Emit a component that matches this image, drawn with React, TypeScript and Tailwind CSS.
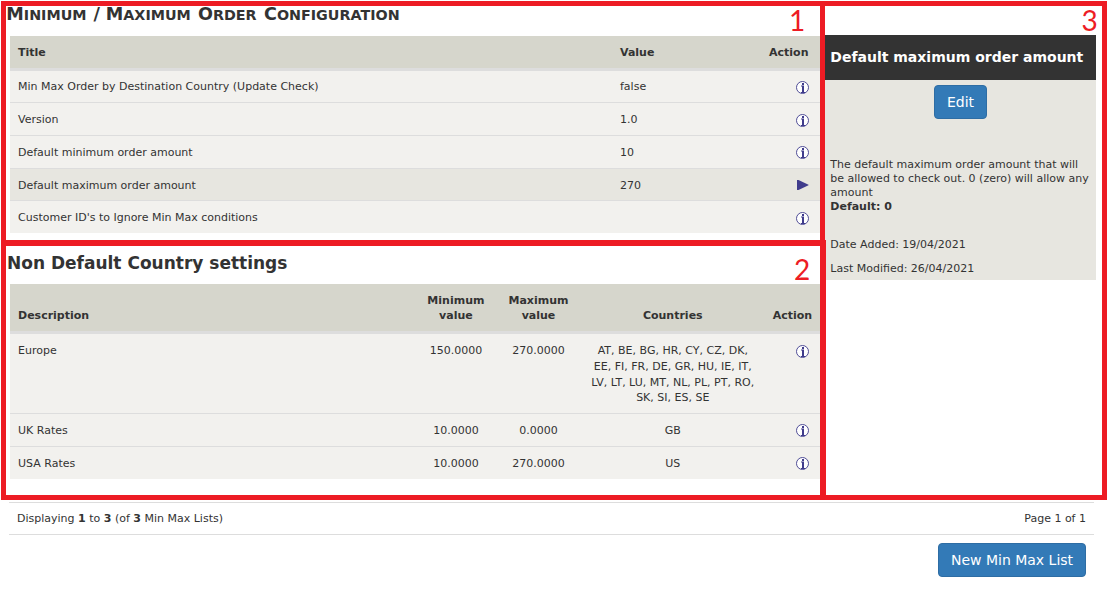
import type { ReactNode } from "react";

type ConfigRow = { title: string; value: string; height: string; icon: string; selected?: boolean };
type RateRow = { name: string; min: string; max: string; countries: string; height: string; icon: string };

const headingWords = [
  { text: "Minimum", style: "w-[87.3px] first-letter:text-[17.6px]" },
  { text: "/", style: "w-[12.2px] text-[17.6px]" },
  { text: "Maximum", style: "w-[92.2px] first-letter:text-[17.6px]" },
  { text: "Order", style: "w-[66px] first-letter:text-[17.6px]" },
  { text: "Configuration", style: "first-letter:text-[17.6px]" },
];

const configRows: ConfigRow[] = [
  { title: "Min Max Order by Destination Country (Update Check)", value: "false", height: "h-[31px] pt-2", icon: "mt-[2px]" },
  { title: "Version", value: "1.0", height: "h-[33px] pt-[9px] border-t", icon: "mt-[2px]" },
  { title: "Default minimum order amount", value: "10", height: "h-[33px] pt-[9px] border-t", icon: "mt-px" },
  { title: "Default maximum order amount", value: "270", height: "h-8 pt-[9px] border-t", icon: "mt-px", selected: true },
  { title: "Customer ID's to Ignore Min Max conditions", value: "", height: "h-[33px] pt-[9px] border-t", icon: "mt-[2px]" },
];

const rateRows: RateRow[] = [
  {
    name: "Europe",
    min: "150.0000",
    max: "270.0000",
    countries: "AT, BE, BG, HR, CY, CZ, DK, EE, FI, FR, DE, GR, HU, IE, IT, LV, LT, LU, MT, NL, PL, PT, RO, SK, SI, ES, SE",
    height: "h-[79px] pt-[9.3px]",
    icon: "mt-[1.7px]",
  },
  { name: "UK Rates", min: "10.0000", max: "0.0000", countries: "GB", height: "h-[33px] pt-[9px] border-t", icon: "mt-px" },
  { name: "USA Rates", min: "10.0000", max: "270.0000", countries: "US", height: "h-[33px] pt-[9px] border-t", icon: "mt-px" },
];

function InfoIcon({ className }: { className: string }) {
  return (
    <svg width="13" height="13" viewBox="0 0 13 13" className={`block shrink-0 ${className}`}>
      <circle cx="6.5" cy="6.5" r="6" fill="#fff" stroke="#403c8c" strokeWidth="0.9" />
      <path d="M6 2h2v2H6zM5 4.5h3V11h1v1H5v-1h1V5.5H5z" fill="#403c8c" />
    </svg>
  );
}

function ArrowIcon({ className }: { className: string }) {
  return (
    <svg width="13" height="13" viewBox="0 0 13 13" className={`block shrink-0 ${className}`}>
      <path d="M1 1h1.5L12.5 5.7v.6L2.5 11H1z" fill="#403c8c" />
    </svg>
  );
}

function Button({ children, className }: { children: ReactNode; className: string }) {
  return (
    <button
      className={`h-[34px] rounded-[4px] border border-[#2e6da4] bg-[#337ab7] text-center text-[14px] leading-5 text-white ${className}`}
    >
      {children}
    </button>
  );
}

function ConfigTable() {
  return (
    <div className="ml-[10px] w-[813px]">
      <div className="flex h-[35px] border-b-[3px] border-[#ddd] bg-[#d6d6cc] pt-[9px] pl-2 font-bold">
        <div className="w-[602px]">Title</div>
        <div className="w-[100px]">Value</div>
        <div className="w-[88.5px] text-right">Action</div>
      </div>
      {configRows.map((row) => (
        <div
          key={row.title}
          className={`flex border-[#ddd] pl-2 ${row.height} ${row.selected ? "bg-[#e7e6e0]" : "bg-[#f2f1ee]"}`}
        >
          <div className="w-[602px]">{row.title}</div>
          <div className="w-[176px]">{row.value}</div>
          {row.selected ? <ArrowIcon className={row.icon} /> : <InfoIcon className={row.icon} />}
        </div>
      ))}
    </div>
  );
}

function RatesTable() {
  return (
    <div className="ml-[10px] w-[813px]">
      <div className="flex h-[50px] items-end border-b-[3px] border-[#ddd] bg-[#d6d6cc] pb-[7px] pl-2 font-bold">
        <div className="w-[397px]">Description</div>
        <div className="w-[81.8px] px-2 text-center">Minimum value</div>
        <div className="w-[83.4px] px-1 text-center">Maximum value</div>
        <div className="w-[185.2px] text-center">Countries</div>
        <div className="w-[46.8px] text-right">Action</div>
      </div>
      {rateRows.map((row) => (
        <div key={row.name} className={`flex border-[#ddd] bg-[#f2f1ee] pl-2 ${row.height}`}>
          <div className="w-[397px]">{row.name}</div>
          <div className="w-[81.8px] text-center">{row.min}</div>
          <div className="w-[83.4px] text-center">{row.max}</div>
          <div className="w-[185.2px] px-2 text-center">{row.countries}</div>
          <div className="w-[30.6px]" />
          <InfoIcon className={row.icon} />
        </div>
      ))}
    </div>
  );
}

function DetailPanel() {
  return (
    <aside className="mt-[35px] w-[273px]">
      <h4 className="flex h-[45px] items-center bg-[#333] pl-[7.3px] text-[14px] font-bold whitespace-nowrap text-white">
        Default maximum order amount
      </h4>
      <div className="flex h-[200px] flex-col bg-[#e7e6e0] pt-[5px] pl-[7.3px] leading-[14px]">
        <Button className="ml-[103.7px] w-[53px]">Edit</Button>
        <p className="mt-[39px] w-[262px]">
          The default maximum order amount that will be allowed to check out. 0 (zero) will allow any amount
          <br />
          <b>Default: 0</b>
        </p>
        <p className="mt-6">Date Added: 19/04/2021</p>
        <p className="mt-[10px]">Last Modified: 26/04/2021</p>
      </div>
    </aside>
  );
}

export default function App() {
  return (
    <div className="relative h-[589px] w-[1109px] overflow-hidden bg-white font-['DejaVu_Sans',sans-serif] text-[11px] leading-[15.7px] text-[#333]">
      <div className="flex h-[502px]">
        <main className="w-[823px]">
          <h1 className="flex h-9 pt-[3px] pl-[6.3px] text-[14.3px] leading-[22px] font-bold whitespace-nowrap uppercase">
            {headingWords.map((word) => (
              <span key={word.text} className={`block ${word.style}`}>
                {word.text}
              </span>
            ))}
          </h1>
          <ConfigTable />
          <h2 className="h-[51px] pt-[19px] pl-[7px] text-[17px] leading-[22px] font-bold">
            Non Default Country settings
          </h2>
          <RatesTable />
        </main>
        <DetailPanel />
      </div>
      <footer className="mr-[15px] ml-[9px]">
        <div className="flex h-[33px] justify-between border-y border-[#ddd] pt-2 pr-2 pl-2">
          <div>
            Displaying <b>1</b> to <b>3</b> (of <b>3</b> Min Max Lists)
          </div>
          <div>Page 1 of 1</div>
        </div>
        <div className="flex justify-end pt-2 pr-2">
          <Button className="w-[148px]">New Min Max List</Button>
        </div>
      </footer>

      <div className="absolute top-px left-px h-[245px] w-[824px] border-5 border-b-6 border-[#ed1c24]" />
      <div className="absolute top-px left-[820px] h-[499px] w-[287px] border-5 border-[#ed1c24]" />
      <div className="absolute top-[240px] left-px h-[260px] w-[825px] border-5 border-t-6 border-r-6 border-[#ed1c24]" />
      <span className="absolute top-[2px] left-[789px] font-[Lato,sans-serif] text-[28px] leading-9 text-[#ed1c24]">1</span>
      <span className="absolute top-[251px] left-[794px] font-[Lato,sans-serif] text-[28px] leading-9 text-[#ed1c24]">2</span>
      <span className="absolute top-[2px] left-[1081.5px] font-[Lato,sans-serif] text-[28px] leading-9 text-[#ed1c24]">3</span>
    </div>
  );
}
